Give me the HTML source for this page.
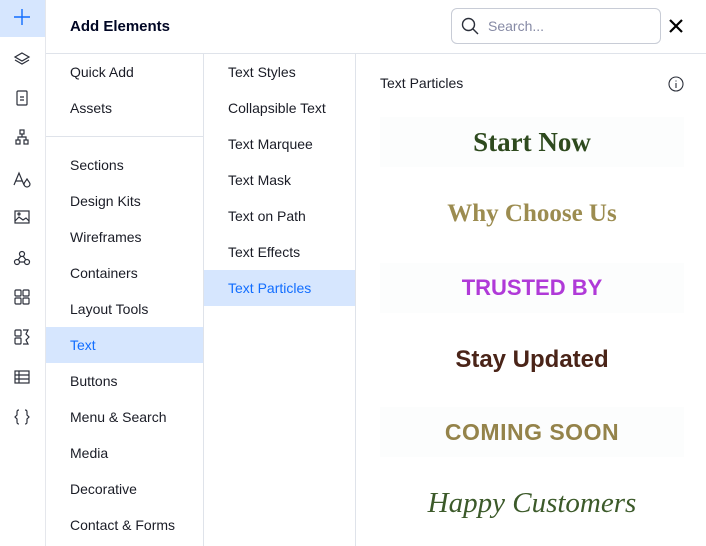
<!DOCTYPE html><html><head><style>
*{margin:0;padding:0;box-sizing:border-box}
body{width:706px;height:546px;overflow:hidden;background:#fff;font-family:"Liberation Sans",sans-serif;position:relative;color:#000624}
.sb{position:absolute;left:0;top:0;width:46px;height:546px;background:#fff;border-right:1px solid #e5e7ec}
.sb svg{position:absolute;left:13px;width:18px;height:18px;fill:none;stroke:#2b2f3a;stroke-width:1.2}
.hdr{position:absolute;left:46px;top:0;right:0;height:54px;border-bottom:1px solid #dfe3ea}
.t{position:absolute;font-size:14px}
.c1{position:absolute;left:46px;top:54px;width:158px;bottom:0;border-right:1px solid #dfe3ea}
.c2{position:absolute;left:204px;top:54px;width:152px;bottom:0;border-right:1px solid #dfe3ea}
.it{position:absolute;left:24px;font-size:14px;color:#1a1c26}
.sel{position:absolute;left:0;right:0;height:36px;background:#d6e6fe}
.card{position:absolute;left:380px;width:304px;height:50px;background:#fcfdfd;text-align:center;line-height:50px}
</style></head><body>
<div class="sb">
<div style="position:absolute;left:0;top:0;width:45px;height:37px;background:#d6e6fe"></div>
<svg style="top:8px;stroke:#116dff;stroke-width:1.4" viewBox="0 0 18 18"><path d="M9 1v16M1 9h16"/></svg>
<svg style="top:50px" viewBox="0 0 18 18"><path d="M9 3l7 4-7 4-7-4z M2 10l7 4 7-4"/></svg>
<svg style="top:89px" viewBox="0 0 18 18"><rect x="4" y="2" width="10" height="14" rx="1"/><path d="M7 8h4M7 11h4"/></svg>
<svg style="top:128px" viewBox="0 0 18 18"><rect x="7" y="2" width="4" height="4"/><rect x="3" y="12" width="4" height="4"/><rect x="11" y="12" width="4" height="4"/><path d="M9 6v3M5 12V9h8v3"/></svg>
<svg style="top:170px" viewBox="0 0 18 18"><path d="M1 15L6 3l5 12M3 11h6M14 9c-2 3-3 4-3 5a3 3 0 006 0c0-1-1-2-3-5z"/></svg>
<svg style="top:208px" viewBox="0 0 18 18"><rect x="2" y="3" width="14" height="12"/><path d="M2 13l4-4 4 3 3-2 3 3"/><circle cx="6" cy="6" r="1"/></svg>
<svg style="top:249px" viewBox="0 0 18 18"><circle cx="9" cy="5" r="2.5"/><circle cx="4" cy="13" r="2.5"/><circle cx="14" cy="13" r="2.5"/><path d="M8 7l-3 4M10 7l3 4M6.5 13h5"/></svg>
<svg style="top:288px" viewBox="0 0 18 18"><rect x="2" y="2" width="6" height="6" rx="1"/><rect x="10" y="2" width="6" height="6" rx="1"/><rect x="2" y="10" width="6" height="6" rx="1"/><rect x="10" y="10" width="6" height="6" rx="1"/></svg>
<svg style="top:328px" viewBox="0 0 18 18"><rect x="2" y="2" width="6" height="6" rx="1"/><rect x="2" y="10" width="6" height="6" rx="1"/><path d="M10 2h5l-2 4 3 3-3 3 2 4h-5"/></svg>
<svg style="top:368px" viewBox="0 0 18 18"><rect x="2" y="3" width="14" height="12"/><path d="M2 7h14M2 11h14M6 3v12"/></svg>
<svg style="top:408px" viewBox="0 0 18 18"><path d="M6 2c-2 0-2 1-2 3v2l-2 2 2 2v2c0 2 0 3 2 3M12 2c2 0 2 1 2 3v2l2 2-2 2v2c0 2 0 3-2 3"/></svg>
</div>
<div class="hdr">
<div class="t" style="left:24px;top:18px;font-weight:bold;font-size:15px">Add Elements</div>
<div style="position:absolute;left:405px;top:8px;width:210px;height:36px;border:1px solid #c8ccd6;border-radius:6px">
<svg style="position:absolute;left:9px;top:8px" width="18" height="18" viewBox="0 0 18 18" fill="none" stroke="#2b2f3a" stroke-width="1.4"><circle cx="7.5" cy="7.5" r="6"/><path d="M12 12l5 5"/></svg>
<span style="position:absolute;left:36px;top:9px;font-size:14px;color:#868aa5">Search...</span></div>
<svg style="position:absolute;left:623px;top:19px" width="14" height="14" viewBox="0 0 14 14" stroke="#000" stroke-width="2.2"><path d="M1 1l12 12M13 1L1 13"/></svg>
</div>
<div class="c1">
<div class="it" style="top:10px">Quick Add</div>
<div class="it" style="top:46px">Assets</div>
<div style="position:absolute;left:0;right:0;top:82px;border-top:1px solid #dfe3ea"></div>
<div class="it" style="top:103px">Sections</div>
<div class="it" style="top:139px">Design Kits</div>
<div class="it" style="top:175px">Wireframes</div>
<div class="it" style="top:211px">Containers</div>
<div class="it" style="top:247px">Layout Tools</div>
<div class="sel" style="top:273px"></div>
<div class="it" style="top:283px;color:#116dff">Text</div>
<div class="it" style="top:319px">Buttons</div>
<div class="it" style="top:355px">Menu &amp; Search</div>
<div class="it" style="top:391px">Media</div>
<div class="it" style="top:427px">Decorative</div>
<div class="it" style="top:463px">Contact &amp; Forms</div>
</div>
<div class="c2">
<div class="it" style="top:10px">Text Styles</div>
<div class="it" style="top:46px">Collapsible Text</div>
<div class="it" style="top:82px">Text Marquee</div>
<div class="it" style="top:118px">Text Mask</div>
<div class="it" style="top:154px">Text on Path</div>
<div class="it" style="top:190px">Text Effects</div>
<div class="sel" style="top:216px"></div>
<div class="it" style="top:226px;color:#116dff">Text Particles</div>
</div>
<div class="t" style="left:380px;top:75px;color:#1a1c26">Text Particles</div>
<svg style="position:absolute;left:668px;top:76px" width="16" height="16" viewBox="0 0 16 16" fill="none" stroke="#2b2f3a" stroke-width="1.1"><circle cx="8" cy="8" r="7"/><path d="M8 7v5M8 4.5v1"/></svg>
<div class="card" style="top:117px;font-family:'Liberation Serif',serif;font-weight:bold;font-size:27px;color:#2e4a1e">Start Now</div>
<div class="card" style="top:189px;background:#fff;font-family:'Liberation Serif',serif;font-weight:bold;font-size:25px;color:#9c8c50">Why Choose Us</div>
<div class="card" style="top:263px;font-weight:bold;font-size:22px;color:#b03ad8">TRUSTED BY</div>
<div class="card" style="top:335px;background:#fff;font-weight:bold;font-size:24px;color:#4a2418">Stay Updated</div>
<div class="card" style="top:407px;font-weight:bold;font-size:23px;color:#94834a;letter-spacing:0.5px">COMING SOON</div>
<div class="card" style="top:478px;background:#fff;font-family:'Liberation Serif',serif;font-style:italic;font-size:29px;color:#3c5a2a">Happy Customers</div>
</body></html>
